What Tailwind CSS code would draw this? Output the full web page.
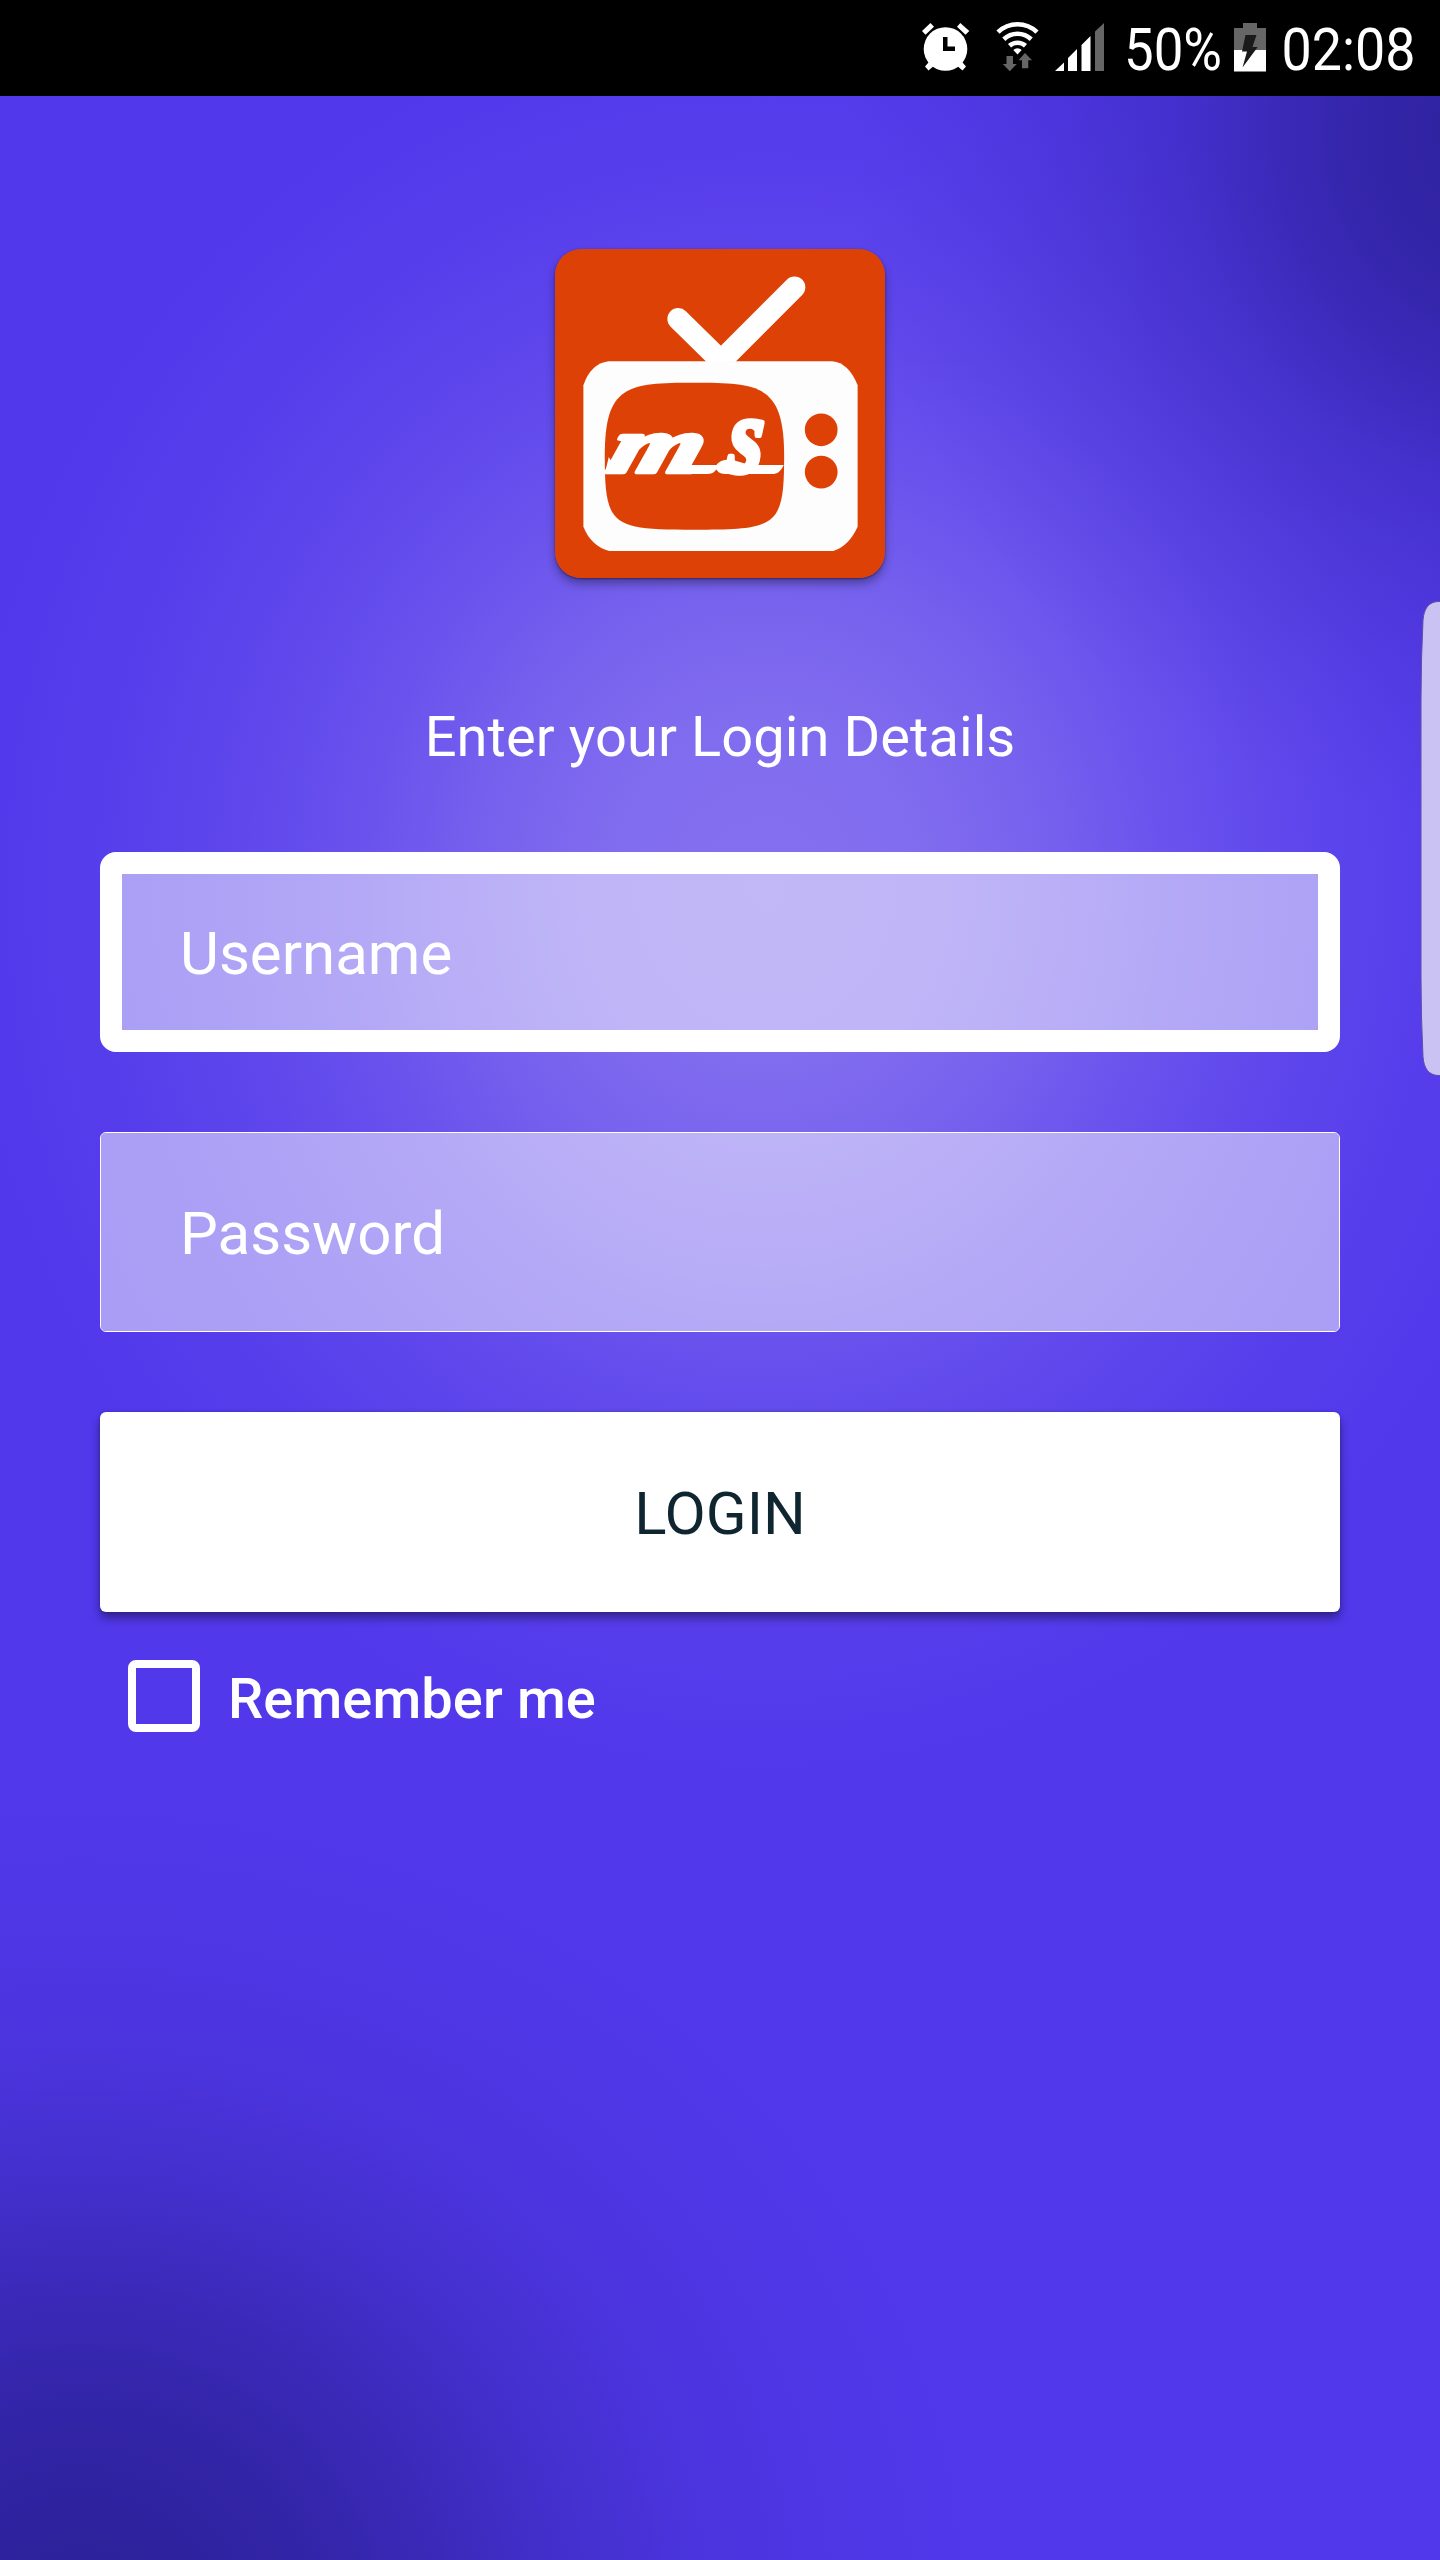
<!DOCTYPE html>
<html lang="en">
<head>
    <meta charset="UTF-8">
    <meta name="viewport" content="width=device-width, initial-scale=1.0">
    <title>Login</title>
    <script src="https://cdn.jsdelivr.net/npm/@tailwindcss/browser@4"></script>
</head>
<body class="relative w-[1440px] h-[2560px] overflow-hidden flex flex-col font-['Roboto',sans-serif] text-white bg-[#5138eb] bg-[radial-gradient(ellipse_680px_700px_at_1530px_130px,#2a1f94f0_0%,#2a1f94c0_25%,#2a1f9488_40%,#2a1f9458_52%,#2a1f9430_68%,#2a1f9412_85%,#2a1f9400_100%),radial-gradient(ellipse_920px_840px_at_80px_2620px,#2a1f94f8_0%,#2a1f94c8_25%,#2a1f9488_42%,#2a1f9455_54%,#2a1f9428_68%,#2a1f940e_85%,#2a1f9400_100%),radial-gradient(ellipse_800px_880px_at_765px_890px,#8470ef_0%,#8470efed_20%,#8470efb8_36%,#8470ef7a_50%,#8470ef46_65%,#8470ef1c_82%,#8470ef00_100%)]">
    <!-- Status bar -->
    <header class="h-24 shrink-0 bg-black">
        <svg class="block w-full h-full" viewBox="0 0 1440 96" fill="#fff">
            <!-- alarm -->
            <circle cx="945.5" cy="49" r="21.8"/>
            <path d="M922 31l8.500-8 3.500 3.800-8.500 8zM969.300 31l-9-8-3.300 3.800 8.500 8zM925 66.500l6-7 5 4.500-7.500 6.500zM966 66.500l-6-7-5 4.500 7.500 6.500z"/>
            <path d="M943 37h4.500v9.500H955V51h-12z" fill="#000"/>
            <!-- wifi -->
            <g fill="none" stroke="#fff" stroke-width="4.600">
                <path d="M998 32.200a28 28 0 0 1 39 0"/>
                <path d="M1003.800 39.200a20 20 0 0 1 27.400 0"/>
                <path d="M1009.500 45.800a12 12 0 0 1 16 0"/>
            </g>
            <path d="M1013.300 50a6 6 0 0 1 8.400 0l-4.200 4.500z"/>
            <path d="M1006.500 56h6.500v8h3.800l-7 7.300-7-7.300h3.700zM1022 68.300v-8h-3.500l6.500-7.300 7 7.300h-3.700v8z" fill="#666"/>
            <!-- signal -->
            <path d="M1055 71l9-8.500V71zM1068 58l9-9v22h-9zM1081.500 45l9-9v35h-9z"/>
            <path d="M1095 31.500l9-8.500v48h-9z" fill="#666"/>
            <text x="1124" y="70" font-size="60" textLength="98" lengthAdjust="spacingAndGlyphs">50%</text>
            <!-- battery -->
            <path d="M1243 23h14v5h9v22h-32V28h9z" fill="#666"/>
            <path d="M1234 50h32v21.500h-32z"/>
            <path d="M1245.500 35h11l-4 12h5.200l-15.200 20.500 4.500-16h-5z" fill="#1a1a1a"/>
            <text x="1281.500" y="70" font-size="60" textLength="134" lengthAdjust="spacingAndGlyphs">02:08</text>
        </svg>
    </header>

    <main class="flex flex-col px-[100px] pt-[153px]">
        <svg class="self-center w-[330px] h-[329px] rounded-[26px] shadow-[0_6px_10px_#0005,0_1px_2px_#0006]" viewBox="75 56 988 988" preserveAspectRatio="none">
            <rect x="75" y="56" width="988" height="988" fill="#de4105"/>
            <path d="M444 266l128 126L792 171" fill="none" stroke="#fff" stroke-width="65" stroke-linecap="round"/>
            <path d="M235 393H905Q955 398 981 465V890Q955 948 908 963H237Q183 948 160 890V465Q182 400 235 393z" fill="#fdfdfd"/>
            <path d="M492 458C690 458 761 465 761 678S740 899 492 899 224 890 224 678 290 458 492 458z" fill="#de4105"/>
            <circle cx="872" cy="599" r="49" fill="#de4105"/>
            <circle cx="872" cy="726" r="49" fill="#de4105"/>
            <g fill="#fff" stroke="#fff" stroke-linejoin="round" font-family="Liberation Serif" font-weight="700" font-style="italic">
                <text transform="translate(226 725) skewX(-16)" font-size="235" stroke-width="14" textLength="275" lengthAdjust="spacingAndGlyphs">m</text>
                <text transform="translate(590 727) skewX(-4)" font-size="325" stroke-width="16" textLength="104" lengthAdjust="spacingAndGlyphs">s</text>
            </g>
            <!-- connecting strokes under the letters -->
            <path d="M224 731l12-50 30 50zM450 705h108q14-20 50-15l50 15h102q-12 26-30 27H585q-18 0-27-14-10 14-27 14h-81z" fill="#fff"/>
        </svg>

        <h1 class="mt-[127px] text-center text-[56px] leading-[64px] tracking-[0.08px]">Enter your Login Details</h1>

        <form class="mt-[83px] flex flex-col">
            <input type="text" placeholder="Username" class="h-[200px] rounded-2xl border-[22px] border-white bg-white/50 bg-clip-padding pt-[3px] pl-[58px] text-[60px] placeholder:text-white outline-none">
            <input type="password" placeholder="Password" class="mt-20 h-[200px] rounded-md border border-white bg-white/50 bg-clip-padding pt-[3px] pl-[79px] text-[60px] placeholder:text-white outline-none">
            <button type="button" class="mt-20 h-[200px] rounded-md bg-white pt-[3px] text-[60px] text-[#0f2530] shadow-[0_6px_10px_#0006,0_0_3px_#0003]">LOGIN</button>
            <label class="mt-12 ml-7 flex items-start gap-7 text-[56px] font-medium leading-[72px]">
                <input type="checkbox" class="appearance-none size-[72px] rounded-lg border-8 border-white">
                <span class="pt-[3px] tracking-[0.1px]">Remember me</span>
            </label>
        </form>
    </main>

    <!-- Edge panel handle -->
    <svg class="absolute right-0 top-[600px] w-5 h-[477px]" viewBox="0 0 20 477">
        <path d="M21 1.500h-3C9 2 4 8 3 20Q1 60 1 100v277q0 40 2 80c1 12 6 18 15 18.500h3z" fill="#c9c2f3" stroke="#5d4fa8" stroke-width="1"/>
    </svg>
</body>
</html>
